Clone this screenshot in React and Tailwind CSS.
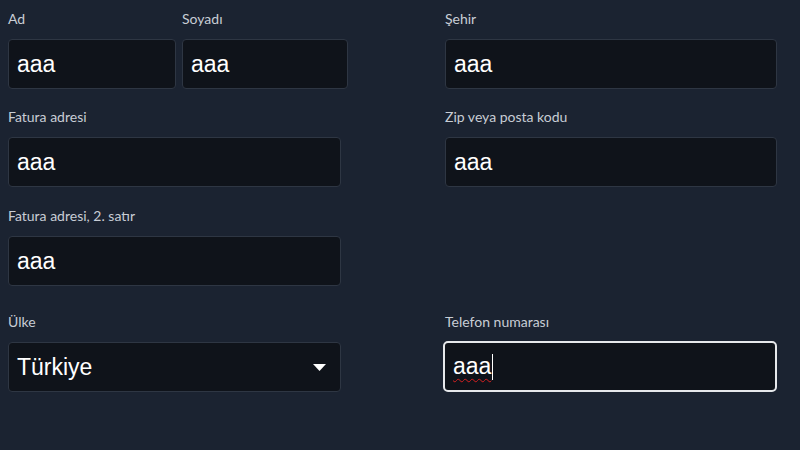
const Label = ({ children }) => (
  <label className="block h-[20px] text-[14px] leading-[20px] text-[#c8cdd5] font-['Lato',sans-serif]">
    {children}
  </label>
);

const Field = ({ label, value = "aaa", className = "" }) => (
  <div className={`flex flex-col gap-[10px] ${className}`}>
    <Label>{label}</Label>
    <input
      readOnly
      defaultValue={value}
      className="h-[50px] w-full rounded-[4px] border border-[#2e3643] bg-[#0f131a] px-[8px] text-[23px] text-white font-['Liberation_Sans',Arial,sans-serif] outline-none"
    />
  </div>
);

export default function App() {
  return (
    <div className="min-h-[450px] w-full bg-[#1b2331] pl-[8px] pt-[9px]">
      <div className="grid grid-cols-[340px_332px] gap-x-[97px]">
        {/* sol sütun */}
        <div className="flex flex-col">
          <div className="flex gap-[6px]">
            <Field label="Ad" className="w-[168px]" />
            <Field label="Soyadı" className="w-[166px]" />
          </div>
          <Field label="Fatura adresi" className="mt-[18px] w-[333px]" />
          <Field label="Fatura adresi, 2. satır" className="mt-[19px] w-[333px]" />
          <div className="mt-[26px] flex w-[333px] flex-col gap-[10px]">
            <Label>Ülke</Label>
            <div className="flex h-[50px] items-center justify-between rounded-[4px] border border-[#2e3643] bg-[#0f131a] pl-[8px] pr-[14px]">
              <span className="text-[23px] text-white font-['Liberation_Sans',Arial,sans-serif]">
                Türkiye
              </span>
              <svg width="13" height="7" viewBox="0 0 13 7">
                <path d="M0 0 L13 0 L6.5 7 Z" fill="#ffffff" />
              </svg>
            </div>
          </div>
        </div>

        {/* sağ sütun */}
        <div className="flex flex-col">
          <Field label="Şehir" />
          <Field label="Zip veya posta kodu" className="mt-[18px]" />
          <div className="h-[99px]" />
          <div className="mt-[26px] flex flex-col gap-[9px]">
            <Label>Telefon numarası</Label>
            <div className="-ml-[2px] flex h-[51px] items-center rounded-[5px] border-2 border-[#e6e8eb] bg-[#0f131a] px-[8px]">
              <span className="text-[23px] text-white underline decoration-wavy decoration-[#d42020] decoration-1 underline-offset-[4px] font-['Liberation_Sans',Arial,sans-serif]">
                aaa
              </span>
              <span className="ml-[1px] h-[26px] w-[1px] bg-white" />
            </div>
          </div>
        </div>
      </div>
    </div>
  );
}
